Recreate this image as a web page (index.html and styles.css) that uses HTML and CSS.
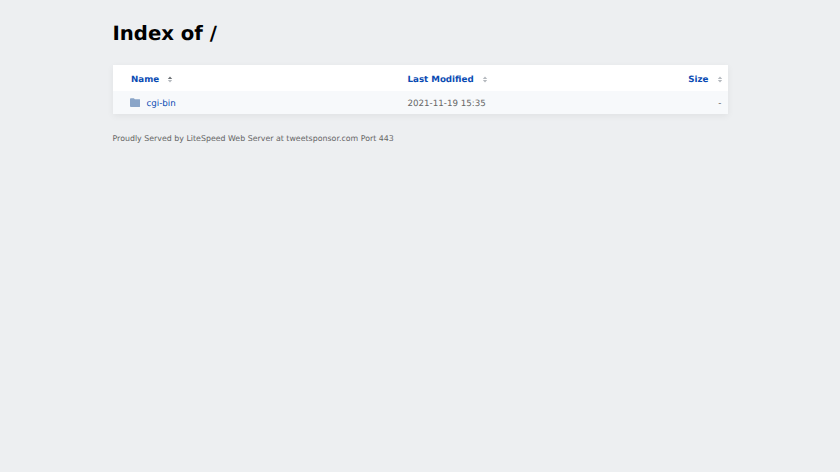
FILE: index.html
```html
<!DOCTYPE html>
<html lang="en">
<head>
<meta charset="utf-8">
<title>Index of /</title>
<link rel="stylesheet" href="styles.css">
</head>
<body>
<main class="page">
  <h1 class="title">Index of /</h1>
  <table class="listing">
    <thead>
      <tr class="head">
        <th class="col-name"><a href="#">Name</a><svg class="sort" viewBox="0 0 6 7" width="6" height="7"><path class="up active" d="M3 .5 5.2 2.9H.8z"/><path class="down" d="M3 6.5 .8 4.1h4.4z"/></svg></th>
        <th class="col-date"><a href="#">Last Modified</a><svg class="sort" viewBox="0 0 6 7" width="6" height="7"><path class="up" d="M3 .5 5.2 2.9H.8z"/><path class="down" d="M3 6.5 .8 4.1h4.4z"/></svg></th>
        <th class="col-size"><a href="#">Size</a><svg class="sort" viewBox="0 0 6 7" width="6" height="7"><path class="up" d="M3 .5 5.2 2.9H.8z"/><path class="down" d="M3 6.5 .8 4.1h4.4z"/></svg></th>
      </tr>
    </thead>
    <tbody>
      <tr class="row">
        <td class="col-name"><a href="#" class="entry"><svg class="folder" viewBox="0 0 12 10" width="10.5" height="9"><path d="M1 0h3.4l1.2 1.4H11a1 1 0 0 1 1 1V9a1 1 0 0 1-1 1H1a1 1 0 0 1-1-1V1a1 1 0 0 1 1-1z"/></svg>cgi-bin</a></td>
        <td class="col-date">2021-11-19 15:35</td>
        <td class="col-size">-</td>
      </tr>
    </tbody>
  </table>
  <p class="footer">Proudly Served by LiteSpeed Web Server at tweetsponsor.com Port 443</p>
</main>
</body>
</html>
```
FILE: styles.css
```css
html, body {
  margin: 0;
  padding: 0;
  background: #edeff1;
  font-family: "DejaVu Sans", sans-serif;
  text-rendering: geometricPrecision;
}
.page {
  width: 615px;
  margin: 0 auto;
  padding-top: 20px;
}
.title {
  margin: 0 0 19px;
  padding-top: 1px;
  font-size: 19.68px;
  line-height: 25px;
  font-weight: 700;
  color: #000;
}
.listing {
  width: 100%;
  border-collapse: collapse;
  table-layout: fixed;
  background: #fff;
  box-shadow: 0 2px 7px rgba(0, 0, 0, 0.06);
  font-size: 8.7px;
}
.listing th,
.listing td {
  box-sizing: border-box;
}
.listing a {
  color: #0a4bb3;
  text-decoration: none;
}
.head {
  height: 26px;
  background: #fff;
}
.head th {
  font-weight: 700;
  padding: 3px 0 0;
  text-align: left;
}
.row {
  height: 23px;
  background: #f7f9fb;
}
.row td {
  padding: 2px 0 0;
  color: #666;
}
.col-name { width: 295px; }
.col-date { width: 232px; }
.listing .col-size { text-align: right; }
.head .col-name { padding-left: 18.5px; }
.row .col-name { padding-left: 17px; }
.col-date { padding-left: 0.5px; }
.head .col-size { padding-right: 5px; }
.row .col-size { padding-right: 6px; }
.sort {
  margin-left: 8px;
  vertical-align: -1px;
}
.sort path { fill: #b4b9be; }
.sort path.active { fill: #6b7075; }
.folder {
  fill: #8aa5c8;
  margin-right: 6.5px;
  vertical-align: -1.5px;
}
.footer {
  margin: 19px 0 0;
  font-size: 7.87px;
  line-height: 12px;
  color: #666;
}
```
